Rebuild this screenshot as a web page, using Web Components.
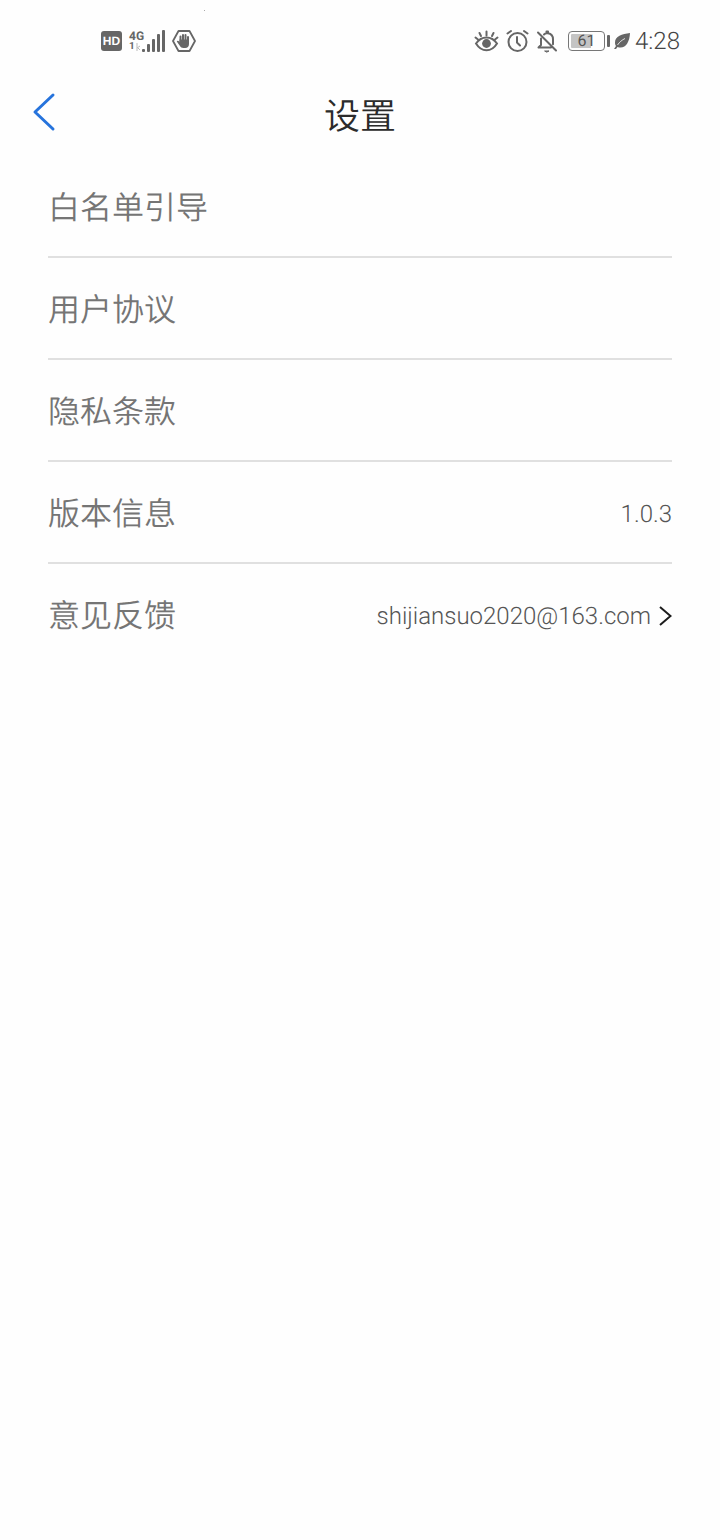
<!DOCTYPE html>
<html lang="zh-CN">
<head>
<meta charset="utf-8">
<meta name="viewport" content="width=device-width, initial-scale=1">
<title>设置</title>
<style>
body { margin: 0; background: #fefefe; font-family: Roboto, "Noto Sans CJK SC", sans-serif; text-rendering: geometricPrecision; }
</style>
</head>
<body>
<settings-page>
  <status-bar time="4:28" battery="61"></status-bar>
  <nav-header>设置</nav-header>
  <settings-list>
    <settings-row href="#whitelist">白名单引导</settings-row>
    <settings-row href="#agreement">用户协议</settings-row>
    <settings-row href="#privacy">隐私条款</settings-row>
    <settings-row value="1.0.3">版本信息</settings-row>
    <settings-row href="mailto:shijiansuo2020@163.com" value="shijiansuo2020@163.com" arrow>意见反馈</settings-row>
  </settings-list>
</settings-page>
<script>
class SettingsPage extends HTMLElement {
  constructor() {
    super();
    this.attachShadow({ mode: "open" }).innerHTML = `
      <style>:host { display: flex; flex-direction: column; min-height: 100vh; }</style>
      <slot></slot>`;
  }
}

class StatusBar extends HTMLElement {
  connectedCallback() {
    this.attachShadow({ mode: "open" }).innerHTML = `
      <style>
        :host { display: flex; justify-content: space-between; align-items: center; box-sizing: border-box;
          height: 72px; padding: 12px 40px 2px 101px; position: relative; color: #666; }
        :host::before { content: ""; position: absolute; left: 204px; top: 10px; width: 1px; height: 1px; background: #aaa; }
        .group { display: flex; align-items: center; height: 28px; }
        svg { display: block; flex: none; }
        .hd { width: 21px; height: 20px; border-radius: 3px; background: #666; color: #fff;
          font: 700 12px/20px "Liberation Sans", sans-serif; text-align: center; }
        .net { width: 15px; margin-left: 7px; font: 700 12px/12px Roboto, sans-serif; }
        .sub { display: flex; align-items: center; gap: 1px; font-size: 10px; line-height: 10px; }
        .bars { margin-left: -2px; }
        .hand { margin-left: 7px; }
        .right { gap: 7px; }
        .battery { display: flex; align-items: center; gap: 2px; margin-left: 3px; }
        .cell { box-sizing: border-box; width: 37px; height: 20px; padding: 2px; border: 1px solid #777; border-radius: 4px;
          font: 16px/14px Roboto, sans-serif; text-align: center; color: #555;
          background: linear-gradient(90deg, #c4c4c4 66%, transparent 66%) content-box; }
        .tip { width: 3px; height: 12px; border-radius: 1px; background: #666; }
        .leaf { margin-left: -3px; }
        .time { font: 300 24px/28px Roboto, sans-serif; color: #444; margin-left: -2px; }
      </style>
      <div class="group">
        <span class="hd">HD</span>
        <span class="net">4G<span class="sub">1<svg width="5" height="8" viewBox="0 0 5 8"><path d="M1 0v8M1 5l3-2M2 5l2 2" stroke="#bbb" fill="none"/></svg></span></span>
        <svg class="bars" width="23" height="22" viewBox="0 0 23 22" fill="#666">
          <rect y="19" width="3" height="3" rx="1"/><rect x="5" y="14" width="3" height="8" rx="1"/>
          <rect x="10" y="9" width="3" height="13" rx="1"/><rect x="15" y="4" width="3" height="18" rx="1"/>
          <rect x="20" width="3" height="22" rx="1"/>
        </svg>
        <svg class="hand" width="24" height="22" viewBox="0 0 24 22">
          <path d="M6.500 1h11L23 11l-5.500 10h-11L1 11z" fill="none" stroke="#666" stroke-width="1.800" stroke-linejoin="round"/>
          <path d="M8.500 12V6.500M11 11V5M13.500 11V5M16 12V7" stroke="#666" stroke-width="2" stroke-linecap="round"/>
          <path d="M7.500 9.500H17v4.500c0 2.500-1.500 4-3.800 4h-1.800c-1.600 0-2.700-.7-3.600-2.200l-3-4.300c.6-1 1.500-.8 2.700.5z" fill="#666"/>
        </svg>
      </div>
      <div class="group right">
        <svg width="25" height="24" viewBox="0 0 25 24" fill="none" stroke="#666" stroke-width="2" stroke-linecap="round">
          <path d="M2 14.500C7.500 6.500 17.500 6.500 23 14.500C17.500 23.500 7.500 23.500 2 14.500z"/>
          <path d="M12.500 2.500v4M5.500 4l1.500 3M19.500 4L18 7M1.500 8.500l2.500 2M23.500 8.500L21 10.500"/>
          <circle cx="12.500" cy="14.500" r="4.400" fill="#666" stroke="none"/>
        </svg>
        <svg width="23" height="24" viewBox="0 0 23 24" fill="none" stroke="#666" stroke-width="2" stroke-linecap="round" stroke-linejoin="round">
          <circle cx="11.500" cy="13" r="9"/><path d="M11 8v5.500l3 3M1.500 4.500L5 2M21.500 4.500L18 2"/>
        </svg>
        <svg width="22" height="24" viewBox="0 0 22 24" fill="none" stroke="#666" stroke-width="2" stroke-linecap="round" stroke-linejoin="round">
          <path d="M2 3.500L20 21.500M8 5.500C8.800 4.700 9.500 4.300 10.500 4.200V2.500h1.500v1.700c3.200.6 5 3 5 6v5M5 9.500V16l-2.500 2.500H15"/>
          <path d="M9 22h4L11 23z" fill="#666" stroke-width="1"/>
        </svg>
        <div class="battery"><span class="cell"></span><span class="tip"></span></div>
        <svg class="leaf" width="16" height="16" viewBox="0 0 16 16">
          <path d="M16 0C8 1 1 3 1 9.500c0 1.500.3 2.500 1 3.500L0 16h2l1.500-2C11 16.500 15.500 10 16 0z" fill="#666"/>
          <path d="M3.500 12C5.500 9 8 7 11 5.500" fill="none" stroke="#fefefe" stroke-width=".8"/>
        </svg>
        <span class="time"></span>
      </div>`;
    this.shadowRoot.querySelector(".cell").textContent = this.getAttribute("battery");
    this.shadowRoot.querySelector(".time").textContent = this.getAttribute("time");
  }
}

class NavHeader extends HTMLElement {
  constructor() {
    super();
    this.attachShadow({ mode: "open" }).innerHTML = `
      <style>
        :host { display: grid; grid-template-columns: 72px 1fr 72px; align-items: center; height: 84px; color: #2b2b2b; }
        button { display: flex; align-items: center; height: 84px; padding: 0 0 4px 32px; border: 0; background: none; }
        h1 { margin: 0; padding-top: 6px; font-size: 36px; line-height: 52px; font-weight: 350; text-align: center; }
      </style>
      <button type="button" aria-label="返回">
        <svg width="24" height="40" viewBox="0 0 24 40"><path d="M21 3L3 20L21 37" fill="none" stroke="#2673dc" stroke-width="3" stroke-linecap="round" stroke-linejoin="round"/></svg>
      </button>
      <h1><slot></slot></h1>`;
  }
}

class SettingsList extends HTMLElement {
  constructor() {
    super();
    this.attachShadow({ mode: "open" }).innerHTML = `
      <style>
        :host { display: flex; flex-direction: column; padding: 0 48px; }
        ::slotted(:not(:last-child)) { border-bottom: 2px solid #e0e0e0; }
      </style>
      <slot></slot>`;
  }
}

class SettingsRow extends HTMLElement {
  connectedCallback() {
    const tag = this.hasAttribute("href") ? "a" : "div";
    this.attachShadow({ mode: "open" }).innerHTML = `
      <style>
        :host { display: block; color: #757575; }
        .row { display: flex; align-items: center; box-sizing: border-box; height: 100px; padding-top: 4px; color: inherit; text-decoration: none; }
        .label { flex: 1; font-size: 32px; line-height: 48px; font-weight: 350; }
        .value { font-size: 24px; line-height: 32px; font-weight: 300; color: #555; }
        svg { display: block; margin-left: 8px; }
      </style>
      <${tag} class="row">
        <span class="label"><slot></slot></span>
        <span class="value"></span>
        ${this.hasAttribute("arrow") ? `<svg width="13" height="20" viewBox="0 0 13 20"><path d="M1 1L11.500 10L1 19" fill="none" stroke="#1c1c1c" stroke-width="2"/></svg>` : ""}
      </${tag}>`;
    if (tag === "a") this.shadowRoot.querySelector("a").href = this.getAttribute("href");
    this.shadowRoot.querySelector(".value").textContent = this.getAttribute("value") || "";
  }
}

customElements.define("settings-page", SettingsPage);
customElements.define("status-bar", StatusBar);
customElements.define("nav-header", NavHeader);
customElements.define("settings-list", SettingsList);
customElements.define("settings-row", SettingsRow);
</script>
</body>
</html>
